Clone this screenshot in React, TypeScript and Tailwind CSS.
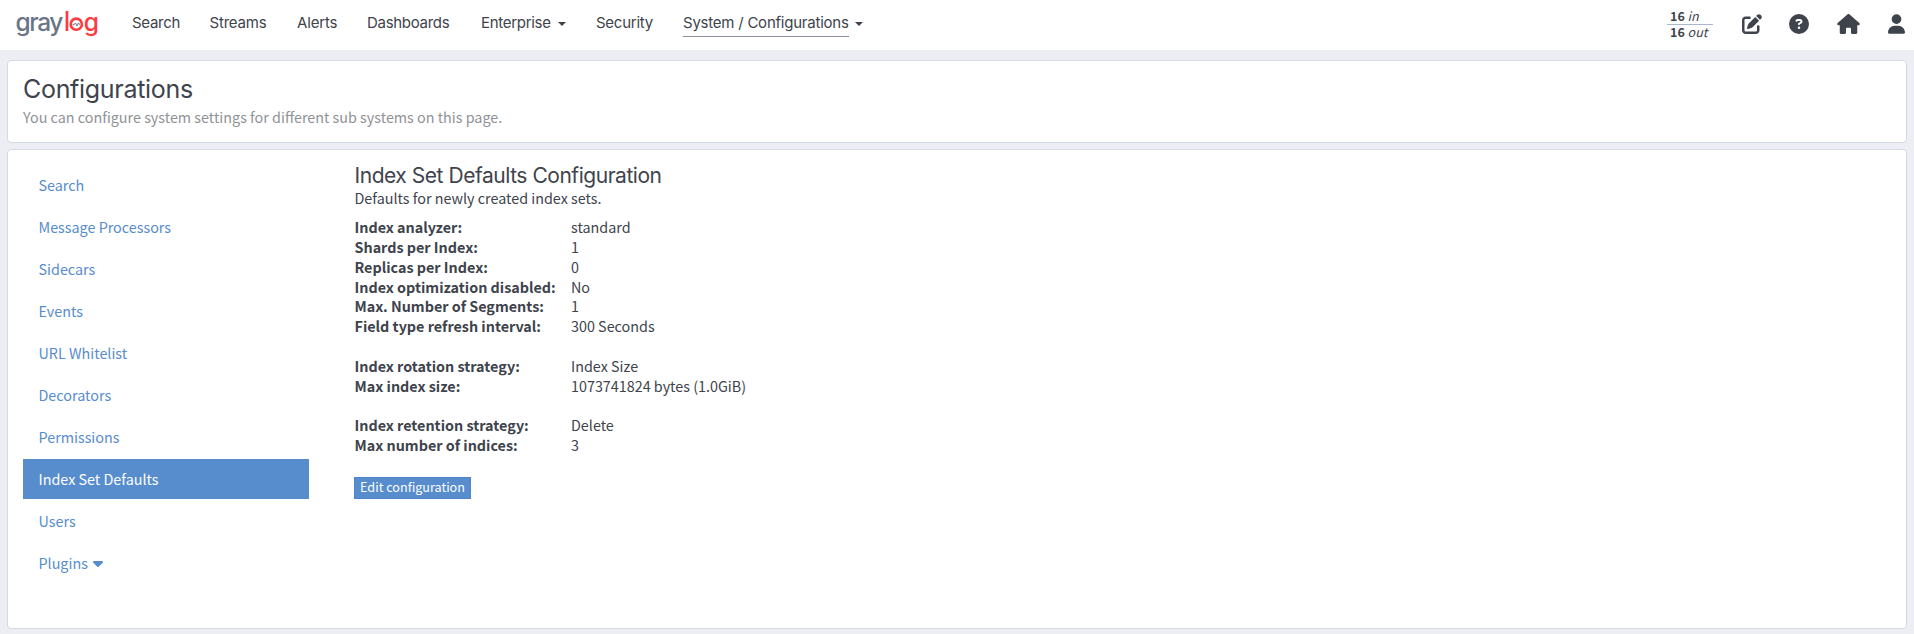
import React from 'react';
import { FaPenToSquare, FaCircleQuestion, FaHouse, FaUser, FaCaretDown } from 'react-icons/fa6';

const NAV = [
  { label: 'Search', box: 'w-[47.5px] tracking-[-0.3px]' },
  { label: 'Streams', box: 'w-[57.5px] tracking-[-0.2px]' },
  { label: 'Alerts', box: 'w-[40px] tracking-[-0.15px]' },
  { label: 'Dashboards', box: 'w-[84px] tracking-[-0.3px]' },
  { label: 'Enterprise', box: 'w-[71px] tracking-[-0.3px]', caret: true },
  { label: 'Security', box: 'w-[57px] tracking-[-0.25px]' },
  { label: 'System / Configurations', box: 'w-[166px] tracking-[-0.23px]', caret: true, active: true },
];

const SECTIONS = [
  'Search',
  'Message Processors',
  'Sidecars',
  'Events',
  'URL Whitelist',
  'Decorators',
  'Permissions',
  'Index Set Defaults',
  'Users',
  'Plugins',
];

const GROUPS = [
  [
    ['Index analyzer:', 'standard'],
    ['Shards per Index:', '1'],
    ['Replicas per Index:', '0'],
    ['Index optimization disabled:', 'No'],
    ['Max. Number of Segments:', '1'],
    ['Field type refresh interval:', '300 Seconds'],
  ],
  [
    ['Index rotation strategy:', 'Index Size'],
    ['Max index size:', '1073741824 bytes (1.0GiB)'],
  ],
  [
    ['Index retention strategy:', 'Delete'],
    ['Max number of indices:', '3'],
  ],
];

function Logo() {
  return (
    <svg width="86" height="36" viewBox="-1 -3 86 36" className="block font-['Inter',sans-serif] text-[24.5px] font-medium">
      <text x="-0.6" y="22" textLength="48" lengthAdjust="spacing" fill="#6b7588">gray</text>
      <rect x="49.6" y="2" width="2.7" height="20" fill="#ff3b3f" />
      <circle cx="60.3" cy="15.2" r="5.6" fill="none" stroke="#ff3b3f" strokeWidth="2.6" />
      <path d="M56.6 15.6h1.6l1.2-1.6 1.7 3 1.3-3 0.7 1.2h1" fill="none" stroke="#6b7588" strokeWidth="1" />
      <text x="67.8" y="22" fill="#ff3b3f">g</text>
    </svg>
  );
}

function Header() {
  return (
    <header className="flex h-[50px] bg-white pl-[15px]">
      <div className="w-[117px] pt-[6px]"><Logo /></div>
      <nav className="flex gap-[30px] pt-[12px] font-['Inter',sans-serif] text-[15px] leading-[21px]">
        {NAV.map((item) => (
          <div key={item.label} className="flex">
            <span className={`${item.box} h-[25px] whitespace-nowrap ${item.active ? 'border-b border-[#8b909b]' : ''}`}>{item.label}</span>
            {item.caret && (
              <svg width="8" height="4" viewBox="0 0 8 4" className="ml-[6px] mt-[10px]">
                <path d="M0 0h8L4 4z" fill="currentColor" />
              </svg>
            )}
          </div>
        ))}
      </nav>
      <div className="ml-auto flex">
        <div className="mr-[29px] mt-[8px] w-[46px] text-[12.5px] leading-[16px]">
          <div className="h-[17px] border-b border-[#a9b7cc] pl-[3px]"><b>16</b> <i>in</i></div>
          <div className="h-[16px] pl-[3px] leading-[13px]"><b>16</b> <i>out</i></div>
        </div>
        <div className="flex pt-[14px]">
          <FaPenToSquare className="mr-[27px] size-5" />
          <FaCircleQuestion className="mr-[28px] size-5" />
          <FaHouse className="mr-[28px] h-5 w-[23px]" />
          <FaUser className="mr-[9px] h-5 w-[17px]" />
        </div>
      </div>
    </header>
  );
}

export default function App() {
  return (
    <div className="h-[634px] overflow-hidden bg-[#edeef3] font-['Noto_Sans_CJK_SC',sans-serif] text-[14.35px] text-[#3e434c]">
      <Header />
      <main className="flex flex-col gap-[6px] pl-[7px] pr-[7px] pt-[10px]">
        <section className="h-[83px] rounded-[4px] border border-[#d5d9e2] bg-white pl-[15px] pt-[12px]">
          <h1 className="font-['Inter',sans-serif] text-[25px] leading-[32px] tracking-[-0.3px]">Configurations</h1>
          <p className="mt-[2px] leading-[20px] text-[#8f9296]">You can configure system settings for different sub systems on this page.</p>
        </section>
        <section className="flex h-[480px] rounded-[4px] border border-[#d5d9e2] bg-white pl-[15px] pt-[15px]">
          <ul className="flex w-[286px] flex-col gap-[2px] text-[#578ccd]">
            {SECTIONS.map((name) => (
              <li
                key={name}
                className={`flex h-10 items-center pl-[15.5px] ${name === 'Index Set Defaults' ? 'bg-[#578ccd] text-white' : ''}`}
              >
                {name}
                {name === 'Plugins' && <FaCaretDown className="ml-[2.5px] size-4" />}
              </li>
            ))}
          </ul>
          <div className="pl-[45px]">
            <h2 className="mt-[-1px] pl-[0.5px] font-['Inter',sans-serif] text-[21px] leading-[24px] tracking-[-0.46px]">Index Set Defaults Configuration</h2>
            <p className="pl-[0.5px] leading-[20px]">Defaults for newly created index sets.</p>
            <div className="mt-[9.25px] flex flex-col gap-[19.8px] pl-[0.5px] leading-[19.8px]">
              {GROUPS.map((rows, i) => (
                <dl key={i}>
                  {rows.map(([term, value]) => (
                    <div key={term} className="flex">
                      <dt className="w-[216.5px] whitespace-nowrap font-bold">{term}</dt>
                      <dd>{value}</dd>
                    </div>
                  ))}
                </dl>
              ))}
            </div>
            <button className="mt-[22px] block h-[22px] w-[117px] border border-[#4f86c9] bg-[#578ccd] pb-[2px] text-center text-[12.6px] leading-[18px] text-white">
              Edit configuration
            </button>
          </div>
        </section>
      </main>
    </div>
  );
}
